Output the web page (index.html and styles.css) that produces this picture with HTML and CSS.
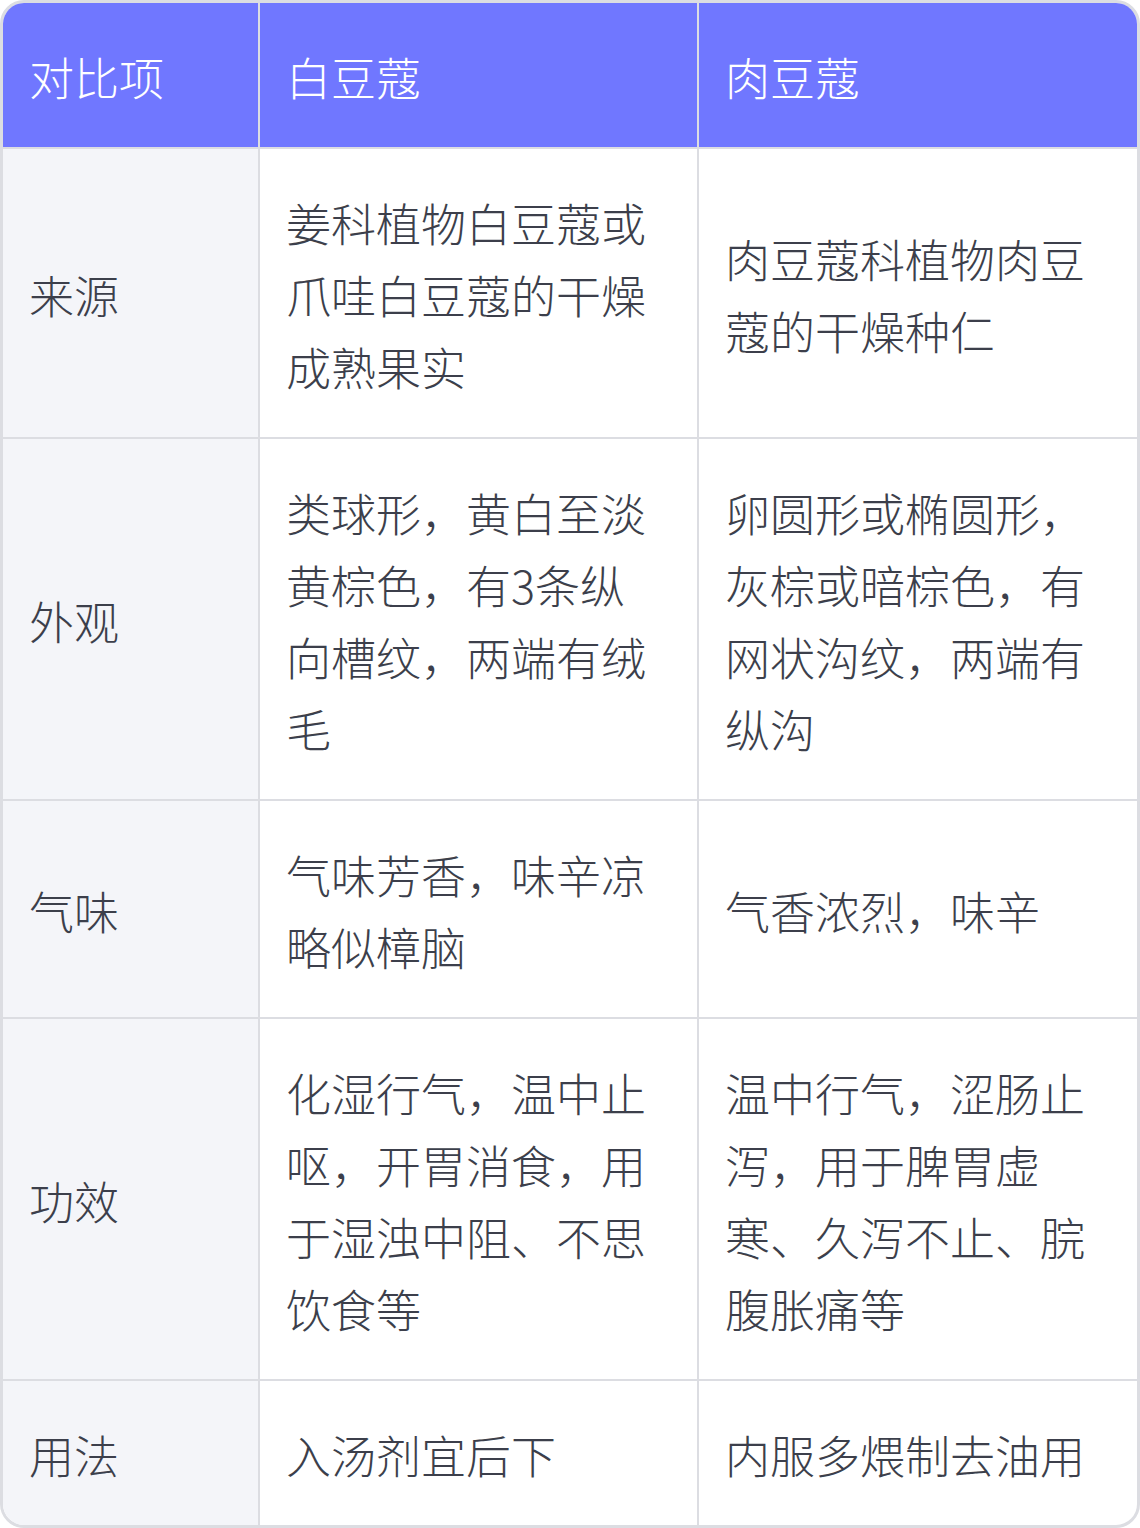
FILE: index.html
```html
<!DOCTYPE html>
<html lang="zh-CN">
<head>
	<meta charset="UTF-8" />
	<meta name="viewport" content="width=device-width, initial-scale=1.0" />
	<title>白豆蔻与肉豆蔻对比</title>
	<link rel="stylesheet" href="styles.css">
</head>
<body>
<div class="card">
	<table class="compare">
		<colgroup>
			<col class="col-key">
			<col class="col-a">
			<col class="col-b">
		</colgroup>
		<thead>
			<tr>
				<th>对比项</th>
				<th>白豆蔻</th>
				<th>肉豆蔻</th>
			</tr>
		</thead>
		<tbody>
			<tr>
				<td>来源</td>
				<td>姜科植物白豆蔻或爪哇白豆蔻的干燥成熟果实</td>
				<td>肉豆蔻科植物肉豆蔻的干燥种仁</td>
			</tr>
			<tr>
				<td>外观</td>
				<td>类球形，黄白至淡黄棕色，有3条纵向槽纹，两端有绒毛</td>
				<td>卵圆形或椭圆形，灰棕或暗棕色，有网状沟纹，两端有纵沟</td>
			</tr>
			<tr>
				<td>气味</td>
				<td>气味芳香，味辛凉略似樟脑</td>
				<td>气香浓烈，味辛</td>
			</tr>
			<tr>
				<td>功效</td>
				<td>化湿行气，温中止呕，开胃消食，用于湿浊中阻、不思饮食等</td>
				<td>温中行气，涩肠止泻，用于脾胃虚寒、久泻不止、脘腹胀痛等</td>
			</tr>
			<tr>
				<td>用法</td>
				<td>入汤剂宜后下</td>
				<td>内服多煨制去油用</td>
			</tr>
		</tbody>
	</table>
</div>
</body>
</html>
```

FILE: styles.css
```css
* {
	padding: 0;
	margin: 0;
	box-sizing: border-box;
}
body {
	background: #fff;
	font-family: "Noto Sans CJK SC", "Noto Sans", sans-serif;
	font-weight: 300;
}
.card {
	width: 1140px;
	height: 1528px;
	border: 3px solid #dcdde2;
	border-radius: 24px;
	overflow: hidden;
}
.compare {
	width: 100%;
	border-collapse: separate;
	border-spacing: 0;
	table-layout: fixed;
}
.col-key {
	width: 257px;
}
.col-a {
	width: 439px;
}
.compare th,
.compare td {
	padding: 38px 30px 34px 26px;
	font-size: 45px;
	line-height: 72px;
	text-align: left;
	vertical-align: middle;
	border-right: 2px solid #dcdde2;
	border-bottom: 2px solid #dcdde2;
}
.compare th:last-child,
.compare td:last-child {
	border-right: none;
}
.compare tbody tr:last-child td {
	border-bottom: none;
}
.compare th {
	background: #7077ff;
	color: #fff;
	font-weight: 300;
}
.compare td {
	color: #3c3f4b;
}
.compare td:first-child {
	background: #f4f5f9;
}
```
